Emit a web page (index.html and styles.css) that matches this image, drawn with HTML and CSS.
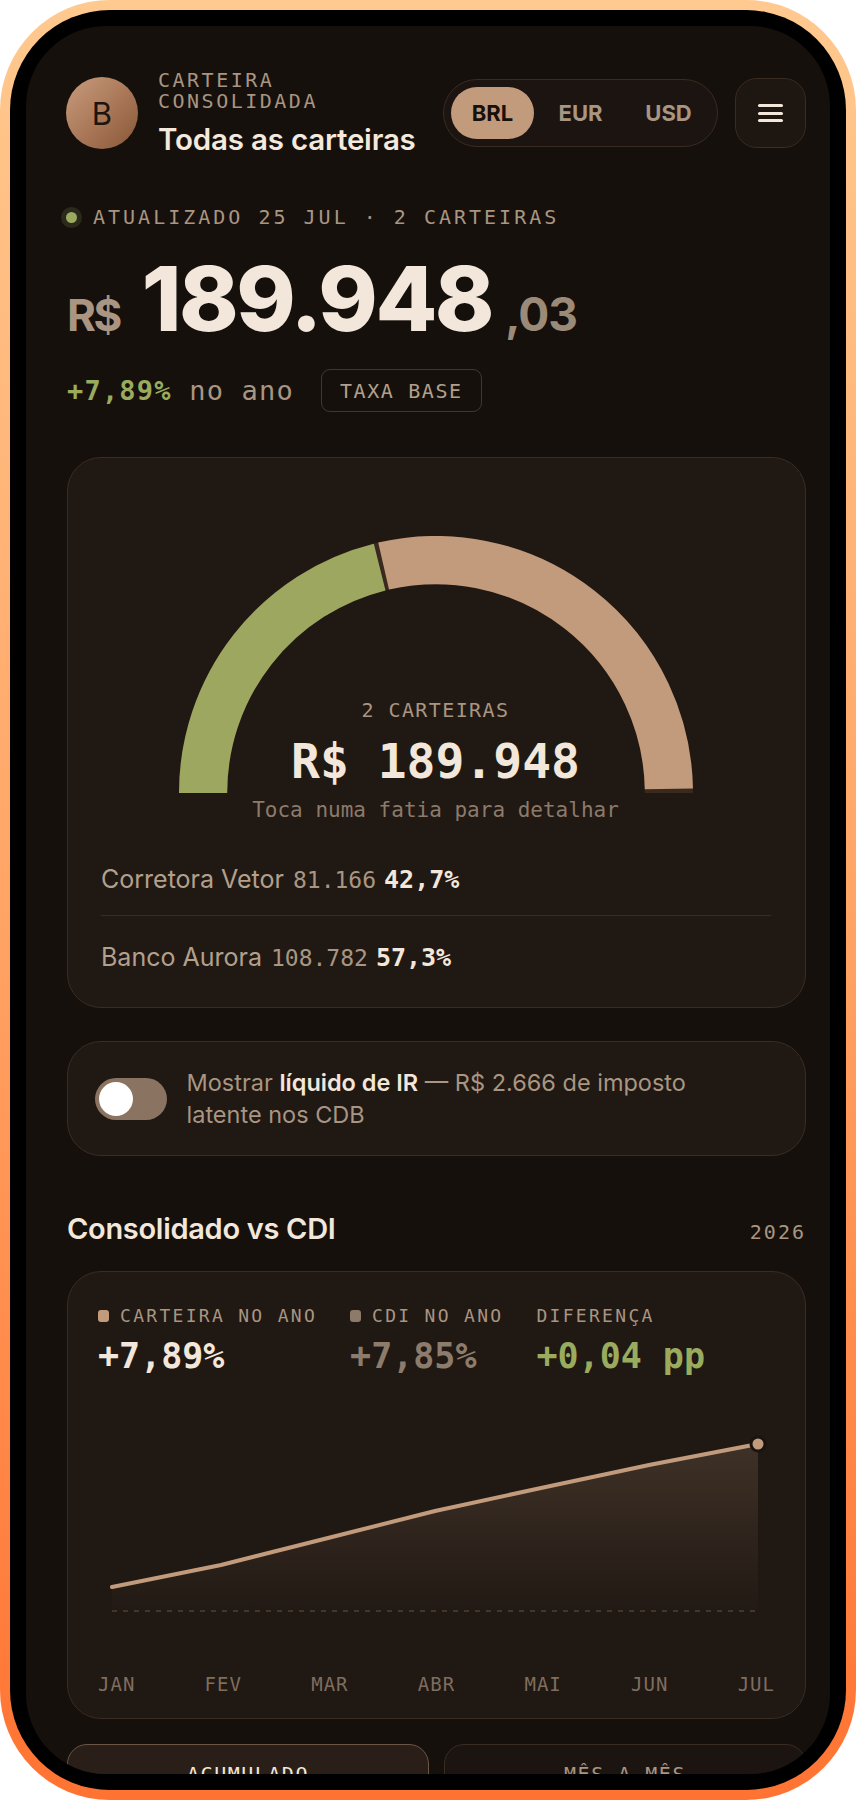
FILE: index.html
```html
<!DOCTYPE html>
<html lang="pt">
<head>
<meta charset="utf-8">
<title>Carteira consolidada</title>
<link rel="stylesheet" href="styles.css">
</head>
<body>
<div class="phone">
  <div class="bezel">
    <div class="screen">
      <header class="header">
        <div class="avatar">B</div>
        <div class="who">
          <div class="eyebrow">CARTEIRA<br>CONSOLIDADA</div>
          <div class="title">Todas as carteiras</div>
        </div>
        <div class="header-right">
          <div class="currency">
            <span class="on">BRL</span>
            <span>EUR</span>
            <span>USD</span>
          </div>
          <button class="menu" aria-label="Menu"><i></i><i></i><i></i></button>
        </div>
      </header>

      <div class="status"><span class="dot"></span>ATUALIZADO 25 JUL · 2 CARTEIRAS</div>

      <div class="amount"><span class="cur">R$</span><span class="int">189.948</span><span class="cents">,03</span></div>

      <div class="change">
        <span class="change-text"><b>+7,89%</b> no ano</span>
        <span class="badge">TAXA BASE</span>
      </div>

      <section class="card gauge-card">
        <div class="gauge">
          <svg width="512" height="256" viewBox="0 0 512 256">
            <path d="M24 256 A232 232 0 0 1 488 256" fill="none" stroke="#39291f" stroke-width="48"/>
            <path d="M24 256 A232 232 0 0 1 199.87 30.89" fill="none" stroke="#9ea760" stroke-width="48"/>
            <path d="M203.81 29.95 A232 232 0 0 1 487.96 251.95" fill="none" stroke="#c19b7b" stroke-width="48"/>
          </svg>
          <div class="gauge-center">
            <div class="g-label">2 CARTEIRAS</div>
            <div class="g-value">R$ 189.948</div>
          </div>
        </div>
        <div class="g-hint">Toca numa fatia para detalhar</div>
        <div class="alloc">
          <div class="row"><span class="name">Corretora Vetor</span><span class="num">81.166</span><span class="pct">42,7%</span></div>
          <div class="row"><span class="name">Banco Aurora</span><span class="num">108.782</span><span class="pct">57,3%</span></div>
        </div>
      </section>

      <section class="card ir-card">
        <div class="switch"><div class="knob"></div></div>
        <p class="ir-text">Mostrar <b>líquido de IR</b> — R$ 2.666 de imposto latente nos CDB</p>
      </section>

      <div class="section-head">
        <h2 class="section-title">Consolidado vs CDI</h2>
        <span class="year">2026</span>
      </div>

      <section class="card chart-card">
        <div class="legend">
          <div class="lg">
            <div class="lg-label"><span class="sq sq-a"></span>CARTEIRA NO ANO</div>
            <div class="lg-value">+7,89%</div>
          </div>
          <div class="lg">
            <div class="lg-label"><span class="sq sq-b"></span>CDI NO ANO</div>
            <div class="lg-value muted">+7,85%</div>
          </div>
          <div class="lg">
            <div class="lg-label">DIFERENÇA</div>
            <div class="lg-value green">+0,04 pp</div>
          </div>
        </div>
        <svg class="chart" width="677" height="296" viewBox="0 0 677 296">
          <defs>
            <linearGradient id="areaFill" x1="0" y1="0" x2="0" y2="1">
              <stop offset="0" stop-color="#c19b7b" stop-opacity="0.19"/>
              <stop offset="1" stop-color="#c19b7b" stop-opacity="0.01"/>
            </linearGradient>
          </defs>
          <path d="M14 211 L123 189 L230 162 L337 135 L443 112 L551 89 L660 68 L660 235 L14 235 Z" fill="url(#areaFill)"/>
          <line x1="14" y1="235" x2="660" y2="235" stroke="#514031" stroke-width="1.5" stroke-dasharray="5 6"/>
          <polyline points="14,211 123,189 230,162 337,135 443,112 551,89 660,68" fill="none" stroke="#c19b7b" stroke-width="4" stroke-linecap="round" stroke-linejoin="round"/>
          <circle cx="660" cy="68" r="7" fill="#c19b7b" stroke="#1a130f" stroke-width="3"/>
        </svg>
        <div class="months"><span>JAN</span><span>FEV</span><span>MAR</span><span>ABR</span><span>MAI</span><span>JUN</span><span>JUL</span></div>
      </section>

      <div class="modes">
        <button class="mode on">ACUMULADO</button>
        <button class="mode">MÊS A MÊS</button>
      </div>
    </div>
  </div>
</div>
</body>
</html>
```

FILE: styles.css
```css
* { box-sizing: border-box; margin: 0; padding: 0; }
html, body { background: #ffffff; }
body { width: 856px; height: 1800px; font-family: Inter, "Noto Sans", sans-serif; }

.phone {
  width: 856px;
  height: 1800px;
  border-radius: 110px;
  padding: 10px;
  background: linear-gradient(180deg, #ffc98f 0%, #ffa566 50%, #ff7332 100%);
}
.bezel { height: 100%; border-radius: 100px; background: #000; padding: 16px; }
.screen {
  height: 100%;
  border-radius: 80px;
  background: #15100c;
  overflow: hidden;
  padding: 51px 24px 0 41px;
}

/* header */
.header { display: flex; align-items: center; height: 72px; }
.avatar {
  flex: none;
  width: 72px; height: 72px; margin-left: -1px;
  border-radius: 50%;
  background: linear-gradient(135deg, #c89c7d 0%, #a87656 55%, #875737 100%);
  display: flex; align-items: center; justify-content: center;
  font-size: 31px; color: #1c140e;
}
.who { margin-left: 20px; }
.eyebrow {
  font-family: "DejaVu Sans Mono", monospace;
  font-size: 20px; line-height: 21px; letter-spacing: 2.5px;
  color: #a99581;
}
.title {
  margin-top: 11px;
  font-size: 29.5px; line-height: 33px; font-weight: 600;
  color: #f3e9dc; letter-spacing: -0.2px; white-space: nowrap;
}
.header-right { margin-left: auto; display: flex; align-items: center; gap: 17px; }
.currency {
  display: flex; gap: 5px; padding: 7px;
  border: 1px solid #3a2c22; border-radius: 40px; background: #1b1410;
}
.currency span {
  width: 83px; height: 52px; border-radius: 26px;
  display: flex; align-items: center; justify-content: center;
  font-size: 22px; font-weight: 700; color: #a99581;
}
.currency span.on { background: #c19b7b; color: #17100b; }
.menu {
  width: 71px; height: 70px; border-radius: 22px;
  border: 1.5px solid #3a2c22; background: #1d1611;
  display: flex; flex-direction: column; align-items: center; justify-content: center; gap: 4.7px;
}
.menu i { display: block; width: 25px; height: 3px; border-radius: 2px; background: #f2e7da; }

/* status */
.status {
  margin-top: 56px; height: 24px;
  display: flex; align-items: center;
  font-family: "DejaVu Sans Mono", monospace;
  font-size: 20px; line-height: 24px; letter-spacing: 3px; color: #a99581;
  white-space: nowrap;
}
.dot {
  flex: none; width: 11px; height: 11px; border-radius: 50%;
  background: #9aab5e; box-shadow: 0 0 0 5px #2b291b;
  margin-left: -1px; margin-right: 16px;
}

/* amount */
.amount { margin-top: 25px; height: 90px; line-height: 90px; white-space: nowrap; }
.cur { font-size: 44px; line-height: 1; font-weight: 700; color: #a99581; margin-right: 22px; letter-spacing: -2.5px; }
.int { font-size: 90px; font-weight: 800; color: #f2e7da; letter-spacing: -2.5px; }
.cents { font-size: 46px; line-height: 1; font-weight: 700; color: #9c8a78; margin-left: 13px; letter-spacing: -1px; }

.change { margin-top: 25px; height: 43px; display: flex; align-items: center; }
.change-text {
  font-family: "DejaVu Sans Mono", monospace;
  font-size: 27px; letter-spacing: 1.2px; color: #a99581; white-space: nowrap;
}
.change-text b { color: #9aab5e; font-weight: 700; }
.badge {
  margin-left: 27px; height: 43px; padding: 0 18px;
  border: 1.5px solid #45362b; border-radius: 9px;
  display: flex; align-items: center;
  font-family: "DejaVu Sans Mono", monospace;
  font-size: 20px; letter-spacing: 1.6px; color: #b3a08c;
}

/* cards */
.card { background: #201813; border: 1.5px solid #3a2c22; border-radius: 34px; }

.gauge-card { margin-top: 45px; padding: 78px 34px 34px 32px; }
.gauge { position: relative; width: 514px; height: 257px; margin: 0 auto; }
.gauge svg { display: block; width: 514px; height: 257px; }
.gauge-center { position: absolute; left: 0; right: 0; bottom: 7px; text-align: center; }
.g-label {
  font-family: "DejaVu Sans Mono", monospace;
  font-size: 20px; line-height: 24px; letter-spacing: 1.4px; color: #a99581;
  margin-bottom: 14px;
}
.g-value {
  font-family: "DejaVu Sans Mono", monospace;
  font-size: 48px; line-height: 50px; font-weight: 700; color: #f2e7da;
}
.g-hint {
  margin-top: 4px; text-align: center;
  font-family: "DejaVu Sans Mono", monospace;
  font-size: 21px; line-height: 26px; color: #8c7a6a;
}
.alloc { margin-top: 17px; margin-left: 1px; }
.row {
  padding: 24px 0 20px; border-bottom: 1.5px solid #3a2c22;
  font-size: 25px; line-height: 30px; white-space: nowrap;
}
.row:last-child { border-bottom: 0; padding: 26px 0 0; }
.name { font-size: 25px; color: #b3a08c; }
.num { font-family: "DejaVu Sans Mono", monospace; font-size: 23px; color: #a99581; margin-left: 9px; }
.pct { font-family: "DejaVu Sans Mono", monospace; font-size: 25px; font-weight: 700; color: #f2e7da; margin-left: 8px; }

/* IR toggle */
.ir-card { margin-top: 33px; height: 115px; display: flex; align-items: center; gap: 20px; padding: 0 26.5px; }
.switch { flex: none; width: 72px; height: 42px; border-radius: 21px; background: #8b7361; padding: 4px; }
.knob { width: 34px; height: 34px; border-radius: 50%; background: #ffffff; }
.ir-text { font-size: 23.5px; line-height: 32px; color: #a99581; max-width: 535px; }
.ir-text b { color: #f2e7da; font-weight: 600; }

/* section */
.section-head { margin-top: 55px; display: flex; justify-content: space-between; align-items: baseline; }
.section-title { font-size: 29px; line-height: 36px; font-weight: 600; color: #f2e7da; letter-spacing: -0.3px; }
.year { font-family: "DejaVu Sans Mono", monospace; font-size: 20px; letter-spacing: 2px; color: #a99581; }

.chart-card { margin-top: 23.5px; padding: 33px 30px 22px; }
.legend { display: flex; gap: 33px; }
.lg-label {
  display: flex; align-items: center; gap: 11px;
  font-family: "DejaVu Sans Mono", monospace;
  font-size: 18px; line-height: 22px; letter-spacing: 2.3px; color: #a99581; white-space: nowrap;
}
.sq { width: 11px; height: 12px; border-radius: 3px; }
.sq-a { background: #c19b7b; }
.sq-b { background: #8c7a6a; }
.lg-value {
  margin-top: 9.5px;
  font-family: "DejaVu Sans Mono", monospace;
  font-size: 35px; line-height: 40px; font-weight: 700; color: #f2e7da; white-space: nowrap;
}
.lg-value.muted { color: #8d7b6b; }
.lg-value.green { color: #9aab5e; }
.chart { display: block; }
.months {
  display: flex; justify-content: space-between;
  font-family: "DejaVu Sans Mono", monospace;
  font-size: 19px; line-height: 24px; letter-spacing: 1px; color: #7f6d5e;
}

.modes { margin-top: 25px; display: grid; grid-template-columns: 1fr 1fr; gap: 15px; }
.mode {
  height: 60px; border-radius: 20px;
  border: 1.5px solid #3a2c22; background: #1b1410;
  font-family: "DejaVu Sans Mono", monospace;
  font-size: 20px; letter-spacing: 1.5px; color: #a99581;
}
.mode.on { background: #2a1f18; border-color: #6b5545; color: #f2e7da; }
```
